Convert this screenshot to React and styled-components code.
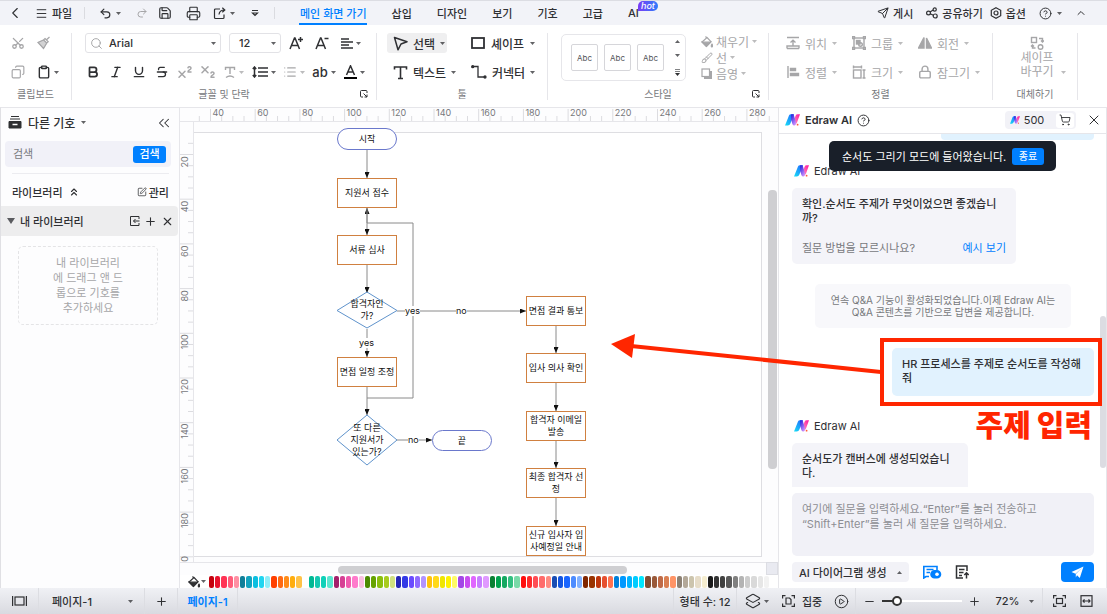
import React, { useState } from 'react';
import styled, { createGlobalStyle, css } from 'styled-components';
import {
	ChevronLeft, ChevronUp, ChevronsLeft, ChevronsUp, Menu, Undo2, Redo2, Save, Printer,
	Scissors, Copy, Clipboard, Search, Bold, Italic, Underline, Strikethrough, Superscript,
	Subscript, List, Send, CircleHelp, Lock, Plus, Minus, X,
	SquarePen, ShoppingCart, Layers2, CirclePlay, Brush,
} from 'lucide-react';

const COLORS = {
	BLUE: '#0080ff',
	TEXT: '#2f3033',
	MUTED: '#a6a6a8',
	LABEL: '#77787c',
	LINE: '#e6e6ea',
	BAR: '#f2f3f8',
	BUBBLE: '#f4f4f9',
	RED: '#ff2600',
};

const GlobalStyle = createGlobalStyle`
	* { box-sizing: border-box; }
	body {
		margin: 0;
		overflow: hidden;
		font-family: Inter, "Noto Sans CJK KR", sans-serif;
		font-size: 11px;
		color: ${COLORS.TEXT};
		background: #fff;
	}
	button, input, textarea {
		font: inherit;
		color: inherit;
		border: none;
		background: none;
		padding: 0;
		margin: 0;
		outline: none;
	}
	svg { flex: none; display: block; }
`

const Page = styled.div`
	height: 100vh;
	display: flex;
	flex-direction: column;
	overflow: hidden;
`

const Main = styled.main`
	flex: 1;
	min-height: 0;
	display: flex;
`

/* top bar */

const TopBar = styled.header`
	height: 25px;
	flex: none;
	display: flex;
	align-items: stretch;
	background: ${COLORS.BAR};
	border-top: 1px solid #dcdde3;
	white-space: nowrap;
`

const BarButton = styled.button`
	width: ${p => p.$w ? p.$w + 'px' : 'auto'};
	display: flex;
	align-items: center;
	justify-content: ${p => p.$start ? 'flex-start' : 'center'};
	padding-left: ${p => p.$start ? '5px' : '0'};
	gap: ${p => p.$gap || 4}px;
	font-weight: 500;
	white-space: nowrap;
	color: ${p => p.$muted ? COLORS.MUTED : 'inherit'};
`

const Divider = styled.span`
	width: 1px;
	height: 12px;
	align-self: center;
	margin: 0 ${p => p.$m || 0}px;
	background: #dadbe0;
`

const Tabs = styled.nav`
	display: flex;
	padding-left: 5px;
`

const Tab = styled.button`
	position: relative;
	padding: 0 12px 0 13px;
	font-weight: 500;
	white-space: nowrap;
	color: ${p => p.$active ? COLORS.BLUE : 'inherit'};
	${p => p.$active && css`
		&::after {
			content: '';
			position: absolute;
			left: 12px;
			right: 12px;
			bottom: 0;
			height: 2px;
			background: ${COLORS.BLUE};
		}
	`}
`

const Hot = styled.span`
	position: absolute;
	left: 23px;
	top: 0;
	height: 10px;
	line-height: 10px;
	padding: 0 3px;
	border-radius: 5px 5px 5px 0;
	font-size: 9px;
	font-style: italic;
	color: #fff;
	background: linear-gradient(90deg, #7a3cf5, #2f7dfb);
`

const BarRight = styled.div`
	margin-left: auto;
	padding-right: 20px;
	display: flex;
	gap: 13px;
`

const BarGroup = styled.div`
	display: flex;
	gap: 7px;
`

/* ribbon */

const Ribbon = styled.section`
	height: 82px;
	flex: none;
	display: flex;
	padding-top: 8px;
	background: #fff;
`

const Group = styled.div`
	width: ${p => p.$w}px;
	height: 67px;
	flex: none;
	display: grid;
	grid-template-rows: 20px 20px 14px;
	row-gap: 9px;
	padding-left: ${p => p.$pad}px;
	border-right: 1px solid ${COLORS.LINE};
	position: relative;
`

const Row = styled.div`
	display: flex;
	align-items: center;
	gap: ${p => p.$gap || 0}px;
	padding-left: ${p => p.$pad || 0}px;
`

const GroupLabel = styled.div`
	display: flex;
	align-items: flex-start;
	justify-content: center;
	margin: -4px 0 0 -${p => p.$pad}px;
	font-size: 10px;
	line-height: 14px;
	color: ${COLORS.LABEL};
`

const Launcher = styled.button`
	position: absolute;
	right: 8px;
	bottom: 2px;
`

const Tool = styled.button`
	width: ${p => p.$w ? p.$w + 'px' : 'auto'};
	height: 20px;
	display: flex;
	align-items: center;
	justify-content: center;
	gap: 3px;
	font-size: 13px;
	font-weight: 500;
	color: ${p => p.$muted ? COLORS.MUTED : COLORS.TEXT};
`

const CutIcon = styled(Scissors)`
	rotate: -90deg;
`

const CopyIcon = styled(Copy)`
	rotate: 90deg;
`

const FieldBox = styled.div`
	width: ${p => p.$w}px;
	height: 20px;
	display: flex;
	align-items: center;
	gap: 6px;
	padding: 0 4px;
	border: 1px solid #e2e2e6;
	border-radius: 3px;
	input {
		flex: 1;
		min-width: 0;
		font-weight: 500;
		text-indent: ${p => p.$indent || 0}px;
	}
`

const Wide = styled.button`
	width: ${p => p.$w ? p.$w + 'px' : 'auto'};
	height: ${p => p.$h || 20}px;
	display: flex;
	align-items: center;
	gap: ${p => p.$gap || 5}px;
	padding-left: ${p => p.$pad || 0}px;
	border-radius: 3px;
	font-size: 12px;
	font-weight: ${p => p.$muted ? 400 : 500};
	white-space: nowrap;
	color: ${p => p.$muted ? COLORS.MUTED : COLORS.TEXT};
	background: ${p => p.$on ? '#efeff0' : 'none'};
`

const StyleArea = styled.div`
	grid-row: 1 / 3;
	display: flex;
	align-items: center;
	gap: 15px;
`

const Gallery = styled.div`
	width: 125px;
	height: 47px;
	display: flex;
	align-items: center;
	gap: 6px;
	padding-left: 9px;
	border: 1px solid #e6e6ea;
	border-radius: 5px;
`

const Sample = styled.button`
	width: 27px;
	height: 27px;
	border: 1px solid #d6d6da;
	border-radius: 2px;
	font-size: 8px;
	color: #55565a;
`

const GalleryArrows = styled.div`
	height: 36px;
	flex: 1;
	display: flex;
	flex-direction: column;
	align-items: center;
	justify-content: space-between;
`

const Stack = styled.div`
	display: flex;
	flex-direction: column;
`

const Replace = styled.button`
	grid-row: 1 / 3;
	display: flex;
	flex-direction: column;
	align-items: center;
	font-size: 12px;
	line-height: 14px;
	white-space: nowrap;
	color: ${COLORS.MUTED};
	width: 50px;
	padding-top: 3px;
	span { display: flex; align-items: center; gap: 7px; padding-left: 12px; }
`

/* symbols panel */

const Sidebar = styled.aside`
	width: 180px;
	flex: none;
	border-top: 1px solid ${COLORS.LINE};
	border-right: 1px solid ${COLORS.LINE};
	border-left: 1px solid #e0e0e4;
	background: #fdfdfe;
`

const SideHead = styled.div`
	height: 33px;
	display: flex;
	align-items: center;
	padding: 0 6px 4px 7px;
	gap: 6px;
	font-size: 12px;
	font-weight: 500;
`

const Push = styled.span`
	margin-left: auto;
	display: flex;
	align-items: center;
	gap: ${p => p.$gap || 2}px;
`

const SearchForm = styled.form`
	display: flex;
	align-items: center;
	height: 26px;
	margin: 0 8px 6px 4px;
	padding: 0 5px 0 8px;
	border-radius: 4px;
	background: #f1f1f8;
	input { flex: 1; min-width: 0; }
	input::placeholder { color: #77787c; }
	button {
		width: 33px;
		height: 17px;
		border-radius: 3px;
		font-weight: 500;
		line-height: 17px;
		color: #fff;
		background: ${COLORS.BLUE};
	}
`

const LibraryTitle = styled.div`
	display: flex;
	align-items: center;
	gap: 5px;
	height: 33px;
	margin: 0 10px 0 11px;
	padding-top: 3px;
	border-top: 1px solid #ececf0;
	font-weight: 500;
	button { display: flex; align-items: center; gap: 2px; }
`

const LibraryRow = styled.div`
	height: 30px;
	display: flex;
	align-items: center;
	gap: 5px;
	margin-right: 1px;
	padding: 0 4px 0 6px;
	border-radius: 0 4px 4px 0;
	font-weight: 500;
	background: #ededee;
`

const DropZone = styled.div`
	width: 140px;
	height: 79px;
	margin: 10px 0 0 17px;
	padding: 9px 30px;
	border: 1px dashed #e4e4e6;
	border-radius: 5px;
	line-height: 15px;
	text-align: center;
	white-space: nowrap;
	color: ${COLORS.MUTED};
`

/* drawing area */

const Workspace = styled.section`
	flex: 1;
	min-width: 0;
	display: grid;
	grid-template-columns: 14px 1fr 12px;
	grid-template-rows: 14px 1fr 13px 13px;
	border-top: 1px solid ${COLORS.LINE};
	background: #fdfdfe;
	overflow: hidden;
`

const TopRuler = styled.div`
	grid-column: 1 / 4;
	overflow: hidden;
	border-bottom: 1px solid ${COLORS.LINE};
	svg { width: 100%; height: 13px; }
`

const SideRuler = styled.div`
	overflow: hidden;
	border-right: 1px solid ${COLORS.LINE};
	min-height: 0;
	svg { width: 13px; height: 100%; }
`

const Canvas = styled.div`
	position: relative;
	overflow: hidden;
	min-height: 0;
	padding: 10px 4px 5px 0;
`

const Sheet = styled.div`
	height: 100%;
	border: 1px solid #dedee2;
	border-left: none;
	background: #fff;
`

const Links = styled.svg`
	position: absolute;
	left: 0;
	top: 0;
`

const Node = styled.div`
	position: absolute;
	left: ${p => p.$x}px;
	top: ${p => p.$y}px;
	width: 60px;
	height: ${p => p.$h}px;
	display: flex;
	align-items: center;
	justify-content: center;
	text-align: center;
	font-size: 9px;
	line-height: 12px;
	white-space: pre;
	color: #111;
	border: 1px solid transparent;
	${p => p.$kind === 'step' && css`
		border-color: #d08040;
		background: #fff;
	`}
	${p => p.$kind === 'end' && css`
		border-color: #6a78cc;
		border-radius: 11px;
		background: #fff;
	`}
`

const LinkLabel = styled.span`
	position: absolute;
	left: ${p => p.$x}px;
	top: ${p => p.$y}px;
	font-size: 9px;
	line-height: 10px;
	color: #111;
	background: #fff;
`

const VTrack = styled.div`
	padding: 68px 1px 0 2px;
	&::before {
		content: '';
		display: block;
		height: 279px;
		border-radius: 4px;
		background: #cfcfd2;
	}
`

const HTrack = styled.div`
	grid-column: 1 / 3;
	padding: 3px 139px 2px 158px;
	border-top: 1px solid ${COLORS.LINE};
	&::before {
		content: '';
		display: block;
		height: 8px;
		border-radius: 4px;
		background: #cfcfd2;
	}
`

const Corner = styled.div`
	border: 1px solid #dcdde3;
	background: #e9eaf1;
`

const Palette = styled.div`
	grid-column: 1 / 4;
	display: flex;
	align-items: center;
	gap: 1px;
	padding: 0 3px 0 8px;
	background: #fff;
`

const PaletteButton = styled.button`
	width: 20px;
	display: flex;
	align-items: center;
	gap: 1px;
`

const Swatch = styled.button`
	flex: 1;
	min-width: 0;
	height: 12px;
	border-radius: 2px;
	background: ${p => p.$color};
`

/* assistant */

const Assistant = styled.aside`
	width: 329px;
	flex: none;
	position: relative;
	display: flex;
	flex-direction: column;
	border: 1px solid ${COLORS.LINE};
	border-bottom: none;
	background: #fff;
`

const AssistantHead = styled.div`
	height: 26px;
	flex: none;
	display: flex;
	align-items: center;
	gap: 5px;
	padding: 0 4px 1px 6px;
	border-bottom: 1px solid ${COLORS.LINE};
	strong { font-weight: 600; }
`

const Credits = styled.div`
	width: 71px;
	height: 18px;
	display: flex;
	align-items: center;
	justify-content: space-between;
	margin-right: 8px;
	padding: 0 2px 0 5px;
	border-radius: 4px;
	background: #f2f2f7;
	span { margin-right: 8px; }
	button {
		height: 15px;
		padding: 0 3px;
		border-radius: 3px;
		background: #fff;
	}
`

const Chat = styled.div`
	flex: 1;
	min-height: 0;
	overflow: hidden;
	display: flex;
	flex-direction: column;
	align-items: flex-start;
	padding: 0 12px 0 13px;
	line-height: 14px;
`

const Earlier = styled.div`
	width: 153px;
	height: 6px;
	flex: none;
	align-self: flex-end;
	margin-bottom: 21px;
	border-radius: 0 0 4px 4px;
	background: #e1f2fe;
`

const Sender = styled.div`
	height: 20px;
	flex: none;
	display: flex;
	align-items: center;
	gap: 5px;
	margin-bottom: 7px;
	padding-left: 2px;
`

const Bubble = styled.div`
	width: ${p => p.$w}px;
	min-height: ${p => p.$h || 0}px;
	flex: none;
	padding: 9px 10px;
	margin-bottom: 20px;
	border-radius: 5px;
	font-weight: 500;
	white-space: pre-line;
	background: ${COLORS.BUBBLE};
	${p => p.$mine && css`
		align-self: flex-end;
		background: #e1f2fe;
	`}
`

const Hint = styled.div`
	display: flex;
	justify-content: space-between;
	margin-top: 16px;
	font-weight: 400;
	color: ${COLORS.LABEL};
	a { color: ${COLORS.BLUE}; text-decoration: none; }
`

const Notice = styled.div`
	width: 256px;
	height: 44px;
	flex: none;
	align-self: center;
	margin: 0 0 20px;
	padding: 10px 0;
	border-radius: 5px;
	font-size: 10px;
	line-height: 12px;
	text-align: center;
	white-space: pre-line;
	color: ${COLORS.LABEL};
	background: #f8f8fb;
`

const Toast = styled.div`
	position: absolute;
	top: 33px;
	right: 50px;
	width: 227px;
	height: 30px;
	display: flex;
	align-items: center;
	justify-content: space-between;
	padding: 0 12px 0 13px;
	border-radius: 5px;
	white-space: nowrap;
	color: #fff;
	background: #191f29;
	button {
		width: 32px;
		height: 17px;
		border-radius: 3px;
		font-size: 10px;
		line-height: 17px;
		background: ${COLORS.BLUE};
	}
`

const Composer = styled.form`
	flex: none;
	padding: 6px 12px 6px 13px;
	textarea {
		display: block;
		width: 100%;
		height: 63px;
		padding: 9px 10px;
		resize: none;
		border-radius: 5px;
		line-height: 15px;
		background: #f1f1f7;
	}
	textarea::placeholder { color: #8d8e93; }
`

const ComposerBar = styled.div`
	display: flex;
	align-items: center;
	height: 20px;
	margin-top: 6px;
	gap: 13px;
`

const ModeButton = styled.button`
	width: 117px;
	height: 20px;
	display: flex;
	align-items: center;
	justify-content: space-between;
	padding: 0 7px;
	border-radius: 4px;
	font-weight: 500;
	background: #f2f2f7;
`

const SendButton = styled.button`
	width: 33px;
	height: 20px;
	display: flex;
	align-items: center;
	justify-content: center;
	margin-left: auto;
	border-radius: 4px;
	color: #fff;
	background: ${COLORS.BLUE};
`

const ChatThumb = styled.div`
	position: absolute;
	top: 208px;
	right: 0;
	width: 6px;
	height: 152px;
	border-radius: 3px;
	background: #dcdce2;
`

const Frame = styled.div`
	position: absolute;
	top: 230px;
	right: 4px;
	width: 222px;
	height: 68px;
	border: 4px solid ${COLORS.RED};
`

const Pointer = styled.svg`
	position: absolute;
	top: 220px;
	right: 225px;
`

const Callout = styled.div`
	position: absolute;
	top: 297px;
	right: 14px;
	font-size: 30px;
	line-height: 40px;
	font-weight: 900;
	white-space: nowrap;
	color: ${COLORS.RED};
`

/* status bar */

const Status = styled.footer`
	height: 26px;
	flex: none;
	display: flex;
	align-items: stretch;
	white-space: nowrap;
	background: linear-gradient(#f0f1f5, #d9dae0);
`

const Cell = styled.button`
	width: ${p => p.$w ? p.$w + 'px' : 'auto'};
	display: flex;
	align-items: center;
	justify-content: ${p => p.$spread ? 'space-between' : 'center'};
	gap: ${p => p.$gap || 3}px;
	padding: ${p => p.$spread ? '0 11px 0 13px' : '0'};
	font-weight: ${p => p.$active ? 600 : 500};
	white-space: nowrap;
	color: ${p => p.$active ? COLORS.BLUE : 'inherit'};
	border-right: ${p => p.$line ? '1px solid #dcdde2' : 'none'};
`

const StatusRight = styled.div`
	display: flex;
	margin-left: auto;
	padding-right: 10px;
	border-left: 1px solid #dcdde2;
`

const Range = styled.input`
	appearance: none;
	width: 80px;
	height: 10px;
	align-self: center;
	&::-webkit-slider-runnable-track {
		height: 2px;
		background: linear-gradient(90deg, #333 16%, #fff 16%);
	}
	&::-webkit-slider-thumb {
		appearance: none;
		width: 10px;
		height: 10px;
		margin-top: -4px;
		border: 2px solid #333;
		border-radius: 50%;
		background: #fff;
	}
`

const Caret = ({ up }) => (
	<svg width="5" height="3" viewBox="0 0 5 3" fill="currentColor" opacity="0.75">
		<path d={up ? 'M0 3h5L2.5 0z' : 'M0 0h5L2.5 3z'} />
	</svg>
)

const Icon = ({ w = 14, h = 14, sw = 1.2, children }) => (
	<svg width={w} height={h} viewBox={`0 0 ${w} ${h}`} fill="none" stroke="currentColor" strokeWidth={sw}>
		{children}
	</svg>
)

const Logo = ({ size = 15 }) => (
	<svg width={size} height={size * 0.8} viewBox="0 0 15 12">
		<defs>
			<linearGradient id="logoA" x1="0" y1="1" x2="0.8" y2="0">
				<stop offset="0" stopColor="#18e0f5" />
				<stop offset="1" stopColor="#1f6dff" />
			</linearGradient>
			<linearGradient id="logoB" x1="0" y1="0" x2="0.6" y2="1">
				<stop offset="0" stopColor="#1d1bd8" />
				<stop offset="1" stopColor="#c78cff" />
			</linearGradient>
			<linearGradient id="logoC" x1="0" y1="1" x2="1" y2="0">
				<stop offset="0" stopColor="#ff9cc4" />
				<stop offset="1" stopColor="#ff149c" />
			</linearGradient>
		</defs>
		<path d="M0 11.5L4 1.6Q4.5.3 6 .3H9L5.4 9.5Q4.6 11.5 2.8 11.5z" fill="url(#logoA)" />
		<path d="M8.4 7L10.6 1.7Q11.1.3 12.6.3H15L12.2 8Q11.6 9.6 10.2 10.5z" fill="url(#logoC)" />
		<path d="M6.2.3H8.6L11 8.5Q11 11.5 9.3 11.5Q7.9 11.5 7.4 10L6.2 6z" fill="url(#logoB)" />
		<circle cx="12.6" cy="10.7" r="0.9" fill="#ff5a3c" />
	</svg>
)

const Bucket = ({ size = 12 }) => (
	<svg width={size} height={size} viewBox="0 0 12 12" fill="none" stroke="currentColor" strokeWidth="1.2">
		<path d="M4.5.5L6 2.2M6 1.5l4 4.2-4.6 4.6L1 6z" />
		<path d="M1.2 6.2h8.3L5.4 10.3z" fill="currentColor" />
		<path d="M11 8.2c.8 1.2 1 2.8 0 2.8s-.9-1.6 0-2.8z" fill="currentColor" />
	</svg>
)

const ExportIcon = () => (
	<Icon w={13} h={13}><path d="M7 2H2.5Q1.5 2 1.5 3v7.5q0 1 1 1H10q1 0 1-1V7.5M6 7.5Q6.5 3 11.5 3M9.3.8L11.8 3 9.3 5.2" /></Icon>
)

const LauncherIcon = () => (
	<Icon w={8} h={8} sw={1}><path d="M3 7H1.5Q.5 7 .5 6V1.5Q.5.5 1.5.5H6Q7 .5 7 1.5V3M3.5 3.5L7 7M7 4.5V7H4.5" /></Icon>
)

const GROUP_TOOLS = [
	[
		{
			text: '위치',
			icon: <><path d="M1 1.5h12M1 12.5h12M1 12.5V10h3M13 12.5V10h-3M7 10V4.5M4.5 6.5L7 4.2l2.5 2.3M3 10h8" /></>,
		},
		{
			text: '그룹',
			icon: <><rect x="2" y="2" width="10" height="10" /><rect x="4.5" y="4.5" width="3.5" height="3.5" fill="currentColor" /><circle cx="8.5" cy="8.5" r="1.8" /><path d="M.5.5h2v2h-2zM11.5.5h2v2h-2zM.5 11.5h2v2h-2zM11.5 11.5h2v2h-2z" /></>,
		},
		{
			text: '회전',
			icon: <><path d="M6 1.5V12H.5z" fill="currentColor" /><path d="M8.5 2v10h5z" fill="currentColor" /></>,
		},
	],
	[
		{
			text: '정렬',
			icon: <><path d="M2 1v12" /><path d="M4.5 3.5h5v2h-5zM4.5 8.5h8v2h-8z" fill="currentColor" /></>,
		},
		{
			text: '크기',
			icon: <><rect x="1.5" y="5" width="7.5" height="8" /><path d="M1 2h9M1.5.5v3M9.5.5v3M12 5v8M10.5 5h3M10.5 13h3" /></>,
		},
		{ text: '잠그기', lock: true },
	],
]

const SWATCHES = `c4000d e8112d ff3355 ff5c7a ff8fa3 0f7f99 12a3bf 0cbfe0 20d5f0 8eeef8
ff4000 ff6a13 ff8c1a ffad0d ffc247 ffffff 00b894 14c8b0 0fd1b9 5ae6cf a3216b d63f94 f05aae ff7acc f9bfe0
4c8a00 66a300 8abf0d a8cc1e d0e080 2626b5 3339e6 6a4bff 8f6aff b394ff ffc20d ffd91a f0e600 fff200 fffb66
a347e6 c94df0 e066ff c77dff e099ff 0a8033 00a34d 14a861 33bf80 7ad9a8 ff0d0d ff2929 ff4d55 ff6b6b ff8a80
1a4db3 1455e0 1a66ff 4d8cff 80b0ff 802600 993300 bf360c e65030 ff7250 0080d9 0099ff 00b3ff 00ccff 00e6ff
804d33 99593a bf6a47 d97f52 ff9466 8c8073 b3a899 ccc4ad e6dcc8 f5edd0
1a1a1a 333333 404040 595959 808080 b3b3b3 cccccc d9d9d9 e6e6e6 f2f2f2 ffffff`.split(/\s+/)

// positions on the canvas, in canvas pixels
const NODES = [
	{ kind: 'end', x: 143, y: 6, h: 22, text: '시작' },
	{ kind: 'step', x: 143, y: 56, h: 30, text: '지원서 접수' },
	{ kind: 'step', x: 143, y: 113, h: 30, text: '서류 심사' },
	{ kind: 'choice', x: 143, y: 170, h: 36, text: '합격자인\n가?' },
	{ kind: 'step', x: 143, y: 235, h: 30, text: '면접 일정 조정' },
	{ kind: 'choice', x: 143, y: 293, h: 50, text: '또 다른\n지원서가\n있는가?' },
	{ kind: 'end', x: 238, y: 308, h: 21, text: '끝' },
	{ kind: 'step', x: 332, y: 174, h: 30, text: '면접 결과 통보' },
	{ kind: 'step', x: 332, y: 231, h: 30, text: '입사 의사 확인' },
	{ kind: 'step', x: 332, y: 289, h: 30, text: '합격자 이메일\n발송' },
	{ kind: 'step', x: 332, y: 346, h: 30, text: '최종 합격자 선\n정' },
	{ kind: 'step', x: 332, y: 404, h: 30, text: '신규 입사자 입\n사예정일 안내' },
]

const LINKS = [
	'M173 28V56', 'M173 101V86', 'M173 86V113', 'M173 143V171', 'M173 207V235',
	'M173 265V293', 'M203 189H332', 'M203 318H238',
	'M362 204V231', 'M362 261V289', 'M362 319V346', 'M362 376V404',
]

const LABELS = [
	{ x: 211, y: 184, text: 'yes' },
	{ x: 262, y: 184, text: 'no' },
	{ x: 165, y: 216, text: 'yes' },
	{ x: 214, y: 313, text: 'no' },
]

// distance between two labelled marks
const STEP = 44.7

const Ruler = ({ vertical }) => {
	const ticks = []
	const count = vertical ? 37 : 52
	for (let i = -1; i < count; i++) {
		const major = i % 4 === 0
		const at = (vertical ? 32.5 : 30.5) + i * STEP / 4
		const value = (vertical ? 20 : 40) + i * 5
		const from = major ? (vertical ? 0 : 1) : 8
		ticks.push(
			<g key={i}>
				<path d={vertical ? `M${from} ${at}H13` : `M${at} ${from}V14`} stroke="#dcdce0" />
				{major && !vertical && <text x={at + 2} y="8">{value}</text>}
				{major && vertical && (
					<text transform={`translate(8 ${at + (value > 99 ? 16 : 13)}) rotate(-90)`}>{value}</text>
				)}
			</g>
		)
	}
	return <svg fontSize="9" fill="#77787c" fontFamily="Inter, sans-serif">{ticks}</svg>
}

function Header() {
	return (
		<TopBar>
			<BarButton $w={30} aria-label="back"><ChevronLeft size={18} strokeWidth={1.5} /></BarButton>
			<BarButton $w={54} $start><Menu size={13} strokeWidth={1.8} />파일</BarButton>
			<Divider />
			<BarButton $w={50} aria-label="undo"><Undo2 size={13} strokeWidth={2.2} /><Caret /></BarButton>
			<BarButton $w={14} $muted aria-label="redo"><Redo2 size={12} strokeWidth={2} /></BarButton>
			<BarButton $w={32} aria-label="save"><Save size={14} strokeWidth={2} /></BarButton>
			<BarButton $w={25} aria-label="print"><Printer size={15} strokeWidth={1.8} /></BarButton>
			<BarButton $w={36} aria-label="export"><ExportIcon /><Caret /></BarButton>
			<BarButton $w={25} aria-label="more">
				<Icon w={8} h={8}><path d="M1 1.5h6M1.5 4h5L4 6.500z" /></Icon>
			</BarButton>
			<Divider $m={7} />
			<Tabs>
				<Tab $active>메인 화면 가기</Tab>
				{['삽입', '디자인', '보기', '기호', '고급'].map(t => <Tab key={t}>{t}</Tab>)}
				<Tab>AI<Hot>hot</Hot></Tab>
			</Tabs>
			<BarRight>
				<BarButton><Send size={12} strokeWidth={2} />게시</BarButton>
				<BarGroup>
					<BarButton>
						<Icon w={12} h={12}><circle cx="2.5" cy="6" r="1.9" /><circle cx="8.7" cy="2.5" r="1.6" /><circle cx="9.2" cy="9" r="2" /><path d="M4 5l3.2-2M4.2 6.8l3.2 1.5" /></Icon>
						공유하기
					</BarButton>
					<BarButton>
						<Icon w={12} h={12}><path d="M6 .7l4.7 2.6v5.4L6 11.3 1.3 8.7V3.3z" /><circle cx="6" cy="6" r="2" /></Icon>
						옵션
					</BarButton>
				</BarGroup>
				<BarButton $gap={5} aria-label="help"><CircleHelp size={13} strokeWidth={1.8} /><Caret /></BarButton>
				<BarButton aria-label="collapse"><ChevronUp size={12} strokeWidth={2} /></BarButton>
			</BarRight>
		</TopBar>
	)
}

function Toolbar() {
	return (
		<Ribbon>
			<Group $w={72} $pad={11}>
				<Row $gap={12}>
					<Tool $muted aria-label="cut"><CutIcon size={14} strokeWidth={2.2} /></Tool>
					<Tool $muted aria-label="format painter">
						<Icon w={14} h={14}><path d="M12.5 1L9 4.3M8 2.5l3.2 3.2-1.5 1.3L6.5 4zM6.5 4L1 6.5l5.5 6L9.7 7" /><path d="M6.5 4L1.5 6.5l5 5.5L9.7 7z" fill="currentColor" opacity="0.5" /></Icon>
					</Tool>
				</Row>
				<Row $gap={12}>
					<Tool $muted aria-label="copy"><CopyIcon size={14} /></Tool>
					<Tool aria-label="paste"><Clipboard size={14} strokeWidth={2.4} /><Caret /></Tool>
				</Row>
				<GroupLabel $pad={11}>클립보드</GroupLabel>
			</Group>

			<Group $w={305} $pad={9}>
				<Row $gap={2} $pad={4}>
					<Row $gap={8}>
						<FieldBox $w={136}>
							<Search size={13} color="#a6a6a8" strokeWidth={1.8} />
							<input defaultValue="Arial" aria-label="font name" />
							<Caret />
						</FieldBox>
						<FieldBox $w={52} $indent={5}>
							<input defaultValue="12" aria-label="font size" />
							<Caret />
						</FieldBox>
					</Row>
					<Row>
						<Tool $w={26} aria-label="larger text"><Icon w={14} h={14} sw={1.5}><path d="M1 13L5.5 2h.5L10.5 13M2.7 9.5h6.2M11.5 1v5M9 3.5h5" /></Icon></Tool>
						<Tool $w={26} aria-label="smaller text"><Icon w={14} h={14} sw={1.5}><path d="M1 13L5.5 2h.5L10.5 13M2.7 9.5h6.2M9.5 2.5h4" /></Icon></Tool>
						<Tool $w={32} aria-label="align"><Icon w={12} h={12} sw={1.5}><path d="M0 2h8M0 5h12M0 8h8M0 11h12" /></Icon><Caret /></Tool>
					</Row>
				</Row>
				<Row>
					<Tool $w={23} aria-label="bold"><Bold size={14} strokeWidth={3} /></Tool>
					<Tool $w={23} aria-label="italic"><Italic size={14} strokeWidth={2.4} /></Tool>
					<Tool $w={23} aria-label="underline"><Underline size={14} strokeWidth={2.4} /></Tool>
					<Tool $w={23} aria-label="strikethrough"><Strikethrough size={14} strokeWidth={2.2} /></Tool>
					<Tool $w={23} $muted aria-label="superscript"><Superscript size={18} /></Tool>
					<Tool $w={23} $muted aria-label="subscript"><Subscript size={18} /></Tool>
					<Tool $w={30} $muted aria-label="text effect">
						<Icon w={12} h={13} sw={1.4}><path d="M1.5 4V1.5h9V4M6 1.5V8M2 11.5q4-3 8 0" /></Icon><Caret />
					</Tool>
					<Tool $w={30} aria-label="line spacing">
						<Icon w={16} h={12} sw={1.5}><path d="M6 2h10M6 6h10M6 10h10M2.5 1v10M.8 3l1.7-2 1.7 2M.8 9l1.7 2 1.7-2" /></Icon><Caret />
					</Tool>
					<Tool $w={30} $muted aria-label="list"><List size={14} /><Caret /></Tool>
					<Tool $w={30} aria-label="case">ab<Caret /></Tool>
					<Tool $w={30} aria-label="font colour">
						<Icon w={13} h={14} sw={1.5}><path d="M2.5 10L6.5.8 10.5 10M4 7h5" /><path d="M0 13h13" strokeWidth="2" stroke="#000" /></Icon><Caret />
					</Tool>
				</Row>
				<GroupLabel $pad={9}>글꼴 및 단락</GroupLabel>
				<Launcher aria-label="font settings"><LauncherIcon /></Launcher>
			</Group>

			<Group $w={171} $pad={10}>
				<Row $gap={18}>
					<Wide $w={60} $pad={6} $on>
						<Icon w={15} h={15} sw={1.5}><path d="M1.5 1.5l12.5 4.3-6 2.2-3 5.8z" strokeLinejoin="round" /></Icon>선택<Caret />
					</Wide>
					<Wide $pad={6} $gap={6}>
						<Icon w={14} h={14} sw={1.8}><rect x="1" y="2" width="12" height="10" /></Icon>셰이프<Caret />
					</Wide>
				</Row>
				<Row $gap={10}>
					<Wide $w={68} $pad={6}>
						<Icon w={15} h={15} sw={1.6}><path d="M1.5 4.5V2h12v2.5M7.5 2v11.5M5 13.5h5" /></Icon>텍스트<Caret />
					</Wide>
					<Wide $pad={6}>
						<Icon w={16} h={14} sw={1.3}><path d="M1.5 1.5H7v10.5h7" /><circle cx="1.7" cy="1.7" r="1" fill="currentColor" /><circle cx="14" cy="12" r="1" fill="currentColor" /></Icon>커넥터<Caret />
					</Wide>
				</Row>
				<GroupLabel $pad={10}>툴</GroupLabel>
			</Group>

			<Group $w={221} $pad={13}>
				<StyleArea>
					<Gallery>
						<Sample>Abc</Sample>
						<Sample>Abc</Sample>
						<Sample>Abc</Sample>
						<GalleryArrows>
							<Caret up />
							<Caret />
							<Icon w={5} h={7} sw={1}><path d="M0 .5h5M0 2.5h5" opacity="0.6" /><path d="M0 4h5L2.5 7z" fill="currentColor" stroke="none" /></Icon>
						</GalleryArrows>
					</Gallery>
					<Stack>
						<Wide $muted $h={16} $gap={3}><Bucket size={12} />채우기<Caret /></Wide>
						<Wide $muted $h={16} $gap={3}><Brush size={12} />선<Caret /></Wide>
						<Wide $muted $h={16} $gap={3}>
							<Icon w={12} h={11}><rect x="1" y="1" width="7.5" height="7.5" /><path d="M3 10h7V3" strokeWidth="2" /></Icon>음영<Caret />
						</Wide>
					</Stack>
				</StyleArea>
				<GroupLabel $pad={13}>스타일</GroupLabel>
				<Launcher aria-label="style settings"><LauncherIcon /></Launcher>
			</Group>

			<Group $w={224} $pad={17}>
				{GROUP_TOOLS.map((row, i) => (
					<Row key={i}>
						{row.map(t => (
							<Wide key={t.text} $w={66} $muted>
								{t.lock ? <Lock size={14} strokeWidth={2.4} /> : <Icon w={14} h={14} sw={1.4}>{t.icon}</Icon>}
								{t.text}<Caret />
							</Wide>
						))}
					</Row>
				))}
				<GroupLabel $pad={17}>정렬</GroupLabel>
			</Group>

			<Group $w={85} $pad={19}>
				<Replace>
					<Icon w={14} h={15} sw={1.4}><rect x="1.5" y="1.5" width="5" height="5" /><circle cx="10.5" cy="11" r="2.3" /><path d="M9 2.5h3.5V6M11 4.5l1.5 1.5L14 4.5M5.5 12H2.5V9M1 10.5L2.5 9 4 10.5" /></Icon>
					셰이프
					<span>바꾸기<Caret /></span>
				</Replace>
				<GroupLabel $pad={19}>대체하기</GroupLabel>
			</Group>
		</Ribbon>
	)
}

function Symbols() {
	return (
		<Sidebar>
			<SideHead>
				<Icon w={14} h={13} sw={1}><path d="M3 .5h8M2 3h10" /><path d="M1 5.5h12v6.5H1z" fill="currentColor" /><path d="M4.5 8.5h5" stroke="#fff" strokeWidth="1.5" /></Icon>
				다른 기호
				<Caret />
				<Push><ChevronsLeft size={18} strokeWidth={1.4} /></Push>
			</SideHead>
			<SearchForm onSubmit={e => e.preventDefault()}>
				<input placeholder="검색" aria-label="검색" />
				<button type="submit">검색</button>
			</SearchForm>
			<LibraryTitle>
				라이브러리
				<ChevronsUp size={12} strokeWidth={2.2} />
				<Push><button><SquarePen size={10} strokeWidth={1.8} />관리</button></Push>
			</LibraryTitle>
			<LibraryRow>
				<svg width="8" height="6" viewBox="0 0 8 6" fill="#5a5b5f"><path d="M0 0h8L4 6z" /></svg>
				내 라이브러리
				<Push $gap={4}>
					<Icon w={10} h={10} sw={1}><path d="M9 3V.5H.5v9H9V7M9.5 5H3.5M5.5 3L3.5 5l2 2" /></Icon>
					<Plus size={13} strokeWidth={2} />
					<X size={13} strokeWidth={2} />
				</Push>
			</LibraryRow>
			<DropZone>내 라이브러리<br />에 드래그 앤 드<br />롭으로 기호를<br />추가하세요</DropZone>
		</Sidebar>
	)
}

function Drawing() {
	return (
		<Workspace>
			<TopRuler><Ruler /></TopRuler>
			<SideRuler><Ruler vertical /></SideRuler>
			<Canvas>
				<Sheet />
				<Links width="500" height="440" fill="none" stroke="#8a8a8a">
					<defs>
						<marker id="tip" viewBox="0 0 6 5" refX="6" refY="2.5" markerWidth="6" markerHeight="5" orient="auto">
							<path d="M0 0L6 2.5 0 5z" fill="#111" stroke="none" />
						</marker>
					</defs>
					{LINKS.map(d => <path key={d} d={d} markerEnd="url(#tip)" />)}
					<path d="M173 101H219V276H173" />
					<path d="M173 170l30 18.5-30 17.5-30-17.5z" stroke="#5f93cc" />
					<path d="M173 293l30 25-30 25-30-25z" stroke="#5f93cc" />
				</Links>
				{NODES.map(n => <Node key={n.text} $kind={n.kind} $x={n.x} $y={n.y} $h={n.h}>{n.text}</Node>)}
				{LABELS.map((l, i) => <LinkLabel key={i} $x={l.x} $y={l.y}>{l.text}</LinkLabel>)}
			</Canvas>
			<VTrack />
			<HTrack />
			<Corner />
			<Palette>
				<PaletteButton aria-label="fill colour"><Bucket size={12} /><Caret /></PaletteButton>
				{SWATCHES.map((c, i) => <Swatch key={i} $color={'#' + c} aria-label={c} />)}
			</Palette>
		</Workspace>
	)
}

function AssistantPanel() {
	const [input, setInput] = useState('');

	return (
		<Assistant>
			<AssistantHead>
				<Logo />
				<strong>Edraw AI</strong>
				<CircleHelp size={13} strokeWidth={1.8} />
				<Push>
					<Credits>
						<Logo size={10} />
						<span>500</span>
						<button aria-label="cart"><ShoppingCart size={12} strokeWidth={1.8} /></button>
					</Credits>
					<X size={16} strokeWidth={1.5} />
				</Push>
			</AssistantHead>
			<Chat>
				<Earlier />
				<Sender><Logo />Edraw AI</Sender>
				<Bubble $w={224}>
					{'확인.순서도 주제가 무엇이었으면 좋겠습니\n까?'}
					<Hint>질문 방법을 모르시나요?<a href="#examples">예시 보기</a></Hint>
				</Bubble>
				<Notice>{'연속 Q&A 기능이 활성화되었습니다.이제 Edraw AI는\nQ&A 콘텐츠를 기반으로 답변을 제공합니다.'}</Notice>
				<Bubble $w={202} $h={48} $mine>{'HR 프로세스를 주제로 순서도를 작성해\n줘'}</Bubble>
				<Sender><Logo />Edraw AI</Sender>
				<Bubble $w={176} $h={60}>{'순서도가 캔버스에 생성되었습니\n다.'}</Bubble>
			</Chat>
			<Composer onSubmit={e => e.preventDefault()}>
				<textarea
					value={input}
					onChange={e => setInput(e.target.value)}
					aria-label="question"
					placeholder={'여기에 질문을 입력하세요.“Enter”를 눌러 전송하고 “Shift+Enter”를 눌러 새 질문을 입력하세요.'}
				/>
				<ComposerBar>
					<ModeButton type="button">AI 다이어그램 생성<Caret up /></ModeButton>
					<button type="button" aria-label="continuous chat">
						<svg width="20" height="14" viewBox="0 0 20 14" fill="none" stroke={COLORS.BLUE} strokeWidth="1.6">
							<path d="M7 11.5H4l-2.2 1.5V1.5H15V5M4.5 4.5h7M4.5 7.5h3.5" />
							<rect x="9" y="5.7" width="9.5" height="7" rx="3.5" fill={COLORS.BLUE} />
							<circle cx="15" cy="9.2" r="1.8" fill="#fff" stroke="none" />
						</svg>
					</button>
					<button type="button" aria-label="attach file">
						<Icon w={14} h={14} sw={1.5}><path d="M12 6V1H1.5v12H8M4 4.5h5.5M4 7.5h4.5M4 10.5h3M11.5 13.5V8M9.3 10l2.2-2.2L13.7 10" /></Icon>
					</button>
					<SendButton aria-label="send">
						<svg width="13" height="13" viewBox="0 0 13 13" fill="currentColor"><path d="M12.5.5L.5 6l4 1.8zM12.5.5L8.8 12 6 9.2 4.8 11.5V8z" /></svg>
					</SendButton>
				</ComposerBar>
			</Composer>
			<ChatThumb />
			<Toast>순서도 그리기 모드에 들어왔습니다.<button>종료</button></Toast>
			<Frame />
			<Pointer width="270" height="50" viewBox="0 0 270 50">
				<path d="M20 18L270 44" stroke={COLORS.RED} strokeWidth="4" />
				<path d="M0 16L24 6 21 30z" fill={COLORS.RED} />
			</Pointer>
			<Callout>주제 입력</Callout>
		</Assistant>
	)
}

function StatusBar() {
	const [zoom, setZoom] = useState(14);

	return (
		<Status>
			<Cell $w={39} $line aria-label="pages">
				<Icon w={15} h={10} sw={1.2}><path d="M.6 0v10M14.4 0v10" /><rect x="3" y="1" width="9" height="8" /></Icon>
			</Cell>
			<Cell $w={106} $line $spread>페이지-1<Caret /></Cell>
			<Cell $w={33} $line aria-label="add page"><Plus size={13} strokeWidth={2} /></Cell>
			<Cell $w={60} $line $active>페이지-1</Cell>
			<StatusRight>
				<Cell $w={63} $line>형태 수: 12</Cell>
				<Cell $w={40} aria-label="layers"><Layers2 size={16} strokeWidth={1.6} /><Caret /></Cell>
				<Cell $w={50} $gap={7}>
					<Icon w={13} h={12} sw={1.2}><path d="M3.5.6H.6V3.5M9.5.6h2.9v2.9M3.5 11.4H.6V8.5M9.5 11.4h2.9V8.5M4 3h3.5L9 4.5V9H4z" /></Icon>
					집중
				</Cell>
				<Cell $w={29} $line aria-label="play"><CirclePlay size={15} strokeWidth={1.6} /></Cell>
				<Cell $w={26} aria-label="zoom out"><Minus size={13} strokeWidth={1.8} /></Cell>
				<Range type="range" value={zoom} onChange={e => setZoom(e.target.value)} aria-label="zoom" />
				<Cell $w={25} aria-label="zoom in"><Plus size={13} strokeWidth={1.8} /></Cell>
				<Cell $w={56} $gap={9} $line>72%<Caret /></Cell>
				<Cell $w={32} aria-label="fit page">
					<Icon w={13} h={12}><path d="M3.5.6H.6V3.5M9.5.6h2.9v2.9M3.5 11.4H.6V8.5M9.5 11.4h2.9V8.5" /><rect x="3.5" y="3.5" width="6" height="5" /></Icon>
				</Cell>
				<Cell $w={22} aria-label="fit width">
					<Icon w={13} h={12}><rect x="1" y=".7" width="11" height="10.6" /><path d="M3 6h7M4.5 4.3L3 6l1.5 1.7M8.5 4.3L10 6 8.5 7.7" /></Icon>
				</Cell>
			</StatusRight>
		</Status>
	)
}

export default function App() {
	return (
		<Page>
			<GlobalStyle />
			<Header />
			<Toolbar />
			<Main>
				<Symbols />
				<Drawing />
				<AssistantPanel />
			</Main>
			<StatusBar />
		</Page>
	)
}
